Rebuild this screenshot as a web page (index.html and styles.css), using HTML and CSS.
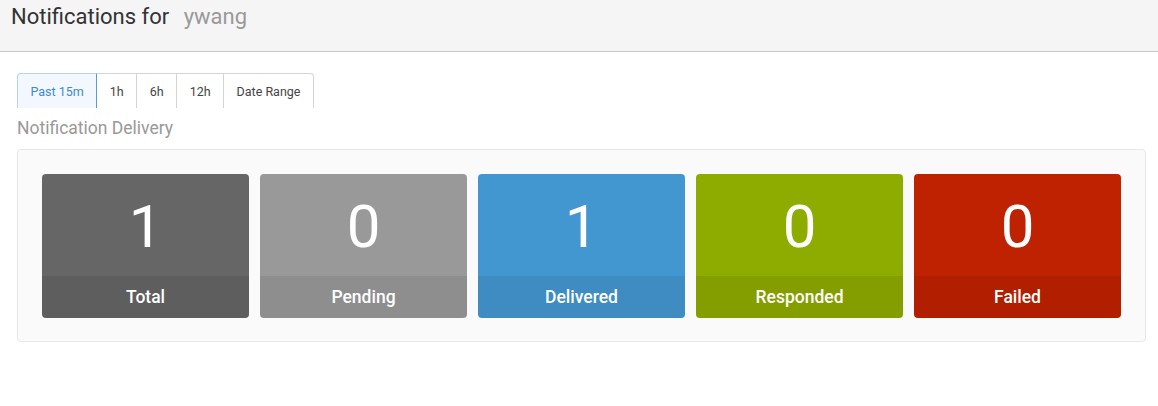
FILE: index.html
```html
<!DOCTYPE html>
<html>
<head>
<meta charset="utf-8">
<link rel="stylesheet" href="styles.css">
</head>
<body>
<div class="header">
  <h1 class="title">Notifications for <span class="user">ywang</span></h1>
</div>
<div class="content">
  <div class="btn-group">
    <button class="btn active">Past 15m</button>
    <button class="btn">1h</button>
    <button class="btn">6h</button>
    <button class="btn">12h</button>
    <button class="btn">Date Range</button>
  </div>
  <h2 class="section-title">Notification Delivery</h2>
  <div class="panel">
    <div class="tile total"><div class="num">1</div><div class="label">Total</div></div>
    <div class="tile pending"><div class="num">0</div><div class="label">Pending</div></div>
    <div class="tile delivered"><div class="num">1</div><div class="label">Delivered</div></div>
    <div class="tile responded"><div class="num">0</div><div class="label">Responded</div></div>
    <div class="tile failed"><div class="num">0</div><div class="label">Failed</div></div>
  </div>
</div>
</body>
</html>
```
FILE: styles.css
```css
* { box-sizing: border-box; }
body {
  margin: 0;
  font-family: Roboto, "Liberation Sans", sans-serif;
  background: #fff;
  color: #333;
}
.header {
  height: 52px;
  background: #f5f5f5;
  border-bottom: 1px solid #c8c8c8;
  padding: 3px 11px 0;
}
.title {
  margin: 0;
  font-size: 22px;
  font-weight: 400;
  line-height: 28px;
  color: #333;
}
.user {
  color: #999;
  margin-left: 9px;
}
.content {
  padding: 21px 12px 0 17px;
}
.btn-group {
  display: flex;
  height: 35px;
}
.btn {
  font-family: inherit;
  font-size: 12.5px;
  color: #444;
  background: #fff;
  border: 1px solid #d4d4d4;
  border-bottom: none;
  border-left: none;
  padding: 0 12.5px;
  height: 35px;
  cursor: pointer;
}
.btn:first-child {
  border-left: 1px solid #d4d4d4;
  border-top-left-radius: 4px;
}
.btn:last-child {
  border-top-right-radius: 4px;
}
.btn.active {
  background: #f2f8fd;
  color: #3a8bd0;
  border-color: #b8d4ec;
  border-right-color: #5b9bd1;
}
.section-title {
  margin: 10px 0 0;
  font-size: 17.5px;
  font-weight: 400;
  line-height: 20px;
  color: #999;
}
.panel {
  margin-top: 11px;
  display: flex;
  gap: 11px;
  padding: 24px 24px 23px;
  background: #fafafa;
  border: 1px solid #e8e8e8;
  border-radius: 4px;
}
.tile {
  flex: 1;
  height: 144px;
  border-radius: 4px;
  color: #fff;
  display: flex;
  flex-direction: column;
  overflow: hidden;
}
.num {
  height: 102px;
  display: flex;
  align-items: center;
  justify-content: center;
  font-size: 60px;
  font-weight: 400;
  padding-top: 2px;
}
.label {
  height: 42px;
  display: flex;
  align-items: center;
  justify-content: center;
  font-size: 17.5px;
  font-weight: 500;
  background: rgba(0, 0, 0, 0.07);
}
.total { background: #666666; }
.pending { background: #999999; }
.delivered { background: #4397d1; }
.responded { background: #8eab00; }
.failed { background: #bf2200; }
```
